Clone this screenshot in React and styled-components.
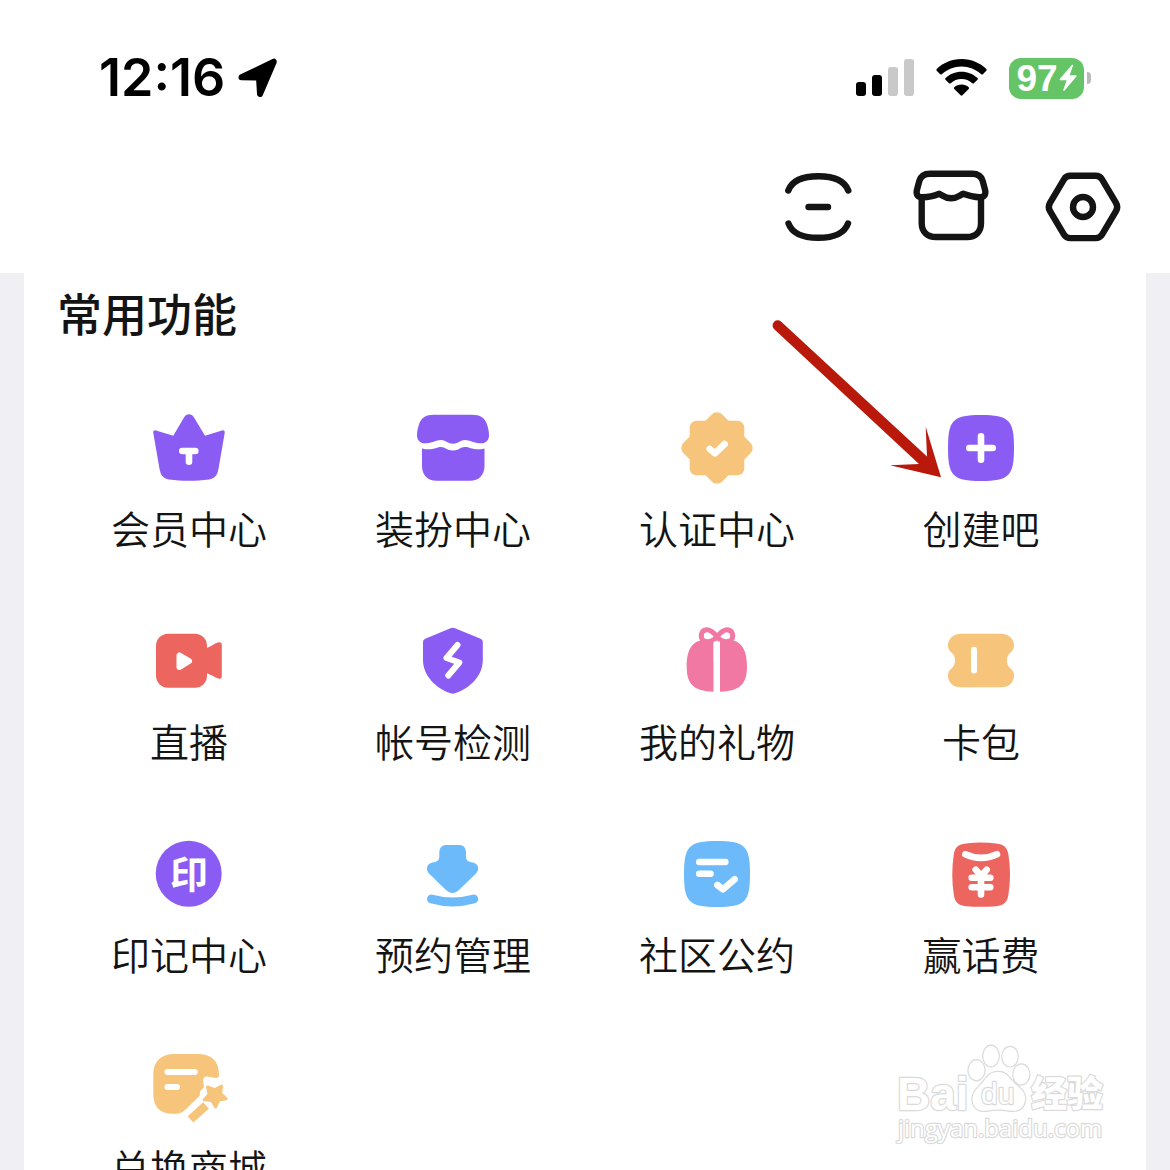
import React from 'react';
import styled, { createGlobalStyle } from 'styled-components';

const PURPLE = '#8b5cf3';
const RED = '#ed655f';
const ORANGE = '#f6c47b';
const PINK = '#f078a2';
const BLUE = '#6cbafa';
const INK = '#141414';

const GlobalStyle = createGlobalStyle`
  * {
    box-sizing: border-box;
  }
  body {
    margin: 0;
    background: #f0f0f4;
    font-family: 'Noto Sans CJK SC', 'Noto Sans', sans-serif;
    color: ${INK};
  }
`;

const Page = styled.div`
  position: relative;
  display: flex;
  flex-direction: column;
  height: 100vh;
  overflow: hidden;
`;

const Header = styled.header`
  flex: none;
  background: #fff;
`;

const StatusBar = styled.div`
  display: flex;
  align-items: center;
  justify-content: space-between;
  height: 156px;
  padding: 0 79px 0 99px;
`;

const StatusGroup = styled.div`
  display: flex;
  align-items: center;
  gap: ${(props) => props.$gap}px;
`;

const Time = styled.span`
  font-family: Inter, sans-serif;
  font-size: 52px;
  font-weight: 600;
  line-height: 60px;
  color: #000;
`;

const Battery = styled.div`
  display: flex;
  align-items: center;
  gap: 3px;

  &::after {
    content: '';
    width: 4px;
    height: 12px;
    border-radius: 0 6px 6px 0;
    background: #b9b9b9;
  }
`;

const BatteryLevel = styled.div`
  display: flex;
  align-items: center;
  justify-content: center;
  gap: 1px;
  width: 75px;
  height: 41px;
  border-radius: 12px;
  background: #65c466;
  color: #fff;
  font-family: 'Liberation Sans', sans-serif;
  font-size: 37px;
  font-weight: 700;
  line-height: 41px;
`;

const Toolbar = styled.nav`
  display: flex;
  justify-content: flex-end;
  gap: 52px;
  padding: 11px 47px 26px;
`;

const IconButton = styled.button`
  width: 80px;
  height: 80px;
  padding: 0;
  border: 0;
  background: none;
  cursor: pointer;
`;

const Card = styled.main`
  flex: none;
  margin: 0 24px;
  padding: 10px 33px 40px;
  background: #fff;
`;

const Title = styled.h1`
  margin: 0 0 65px;
  font-size: 45px;
  font-weight: 500;
  line-height: 60px;
`;

const Grid = styled.div`
  display: grid;
  grid-template-columns: repeat(4, 1fr);
  row-gap: 67px;
`;

const Item = styled.button`
  position: relative;
  display: flex;
  flex-direction: column;
  align-items: center;
  gap: 12px;
  padding: 0;
  border: 0;
  background: none;
  color: inherit;
  font-family: inherit;
  font-size: 39px;
  font-weight: 350;
  line-height: 54px;
  white-space: nowrap;
  cursor: pointer;
`;

const Glyph = styled.svg`
  display: block;
  flex: none;
  width: 80px;
  height: 80px;
  fill: ${(props) => props.$fill || 'none'};
  stroke-linecap: round;
  stroke-linejoin: round;
`;

/* strokes drawn on top of a filled icon */
const Lines = styled.g`
  fill: none;
  stroke: ${(props) => props.$color || '#fff'};
  stroke-width: ${(props) => props.$width || 6.6};
`;

const Pointer = styled.svg`
  position: absolute;
  top: -93px;
  left: -81px;
  width: 180px;
  height: 170px;
  pointer-events: none;
`;

const Watermark = styled.svg`
  position: absolute;
  right: 60px;
  bottom: 20px;
  width: 220px;
  height: 110px;
  fill: #fff;
  stroke: #dadada;
  stroke-width: 2.4;
  stroke-linejoin: round;
  paint-order: stroke;
  pointer-events: none;
`;

const SQUIRCLE = 'M40 7C68 7 73 12 73 40S68 73 40 73 7 68 7 40 12 7 40 7Z';

const LocationIcon = () => (
  <svg width="42" height="42" viewBox="0 0 42 42" fill="#000" stroke="#000" strokeWidth="6" strokeLinejoin="round">
    <path d="M4.500 20.300 36.800 4.700 23 37 22 20.500Z" />
  </svg>
);

const SignalIcon = () => (
  <svg width="58" height="38" viewBox="0 0 58 38">
    <rect x="0" y="23" width="10" height="14" rx="3" />
    <rect x="16" y="16" width="10" height="21" rx="3" />
    <rect x="32" y="8" width="10" height="29" rx="3" fill="#c9c9c9" />
    <rect x="48" y="0" width="10" height="37" rx="3" fill="#c9c9c9" />
  </svg>
);

const WifiIcon = () => (
  <svg width="51" height="38" viewBox="0 0 51 38">
    <path d="M25.500 0C35.500 0 44 3.800 50.300 10.100C50.800 10.600 50.800 11.300 50.300 11.800L46.800 15.200C46.300 15.700 45.700 15.700 45.200 15.200C39.800 10.200 33 7.400 25.500 7.400S11.200 10.200 5.800 15.200C5.300 15.700 4.700 15.700 4.200 15.200L.7 11.800C.2 11.300 .2 10.600 .7 10.100C7 3.800 15.500 0 25.500 0Z" />
    <path d="M25.500 12.700C31.800 12.700 37.300 15 41.500 19C42 19.500 42 20.200 41.500 20.700L37.900 24.200C37.400 24.700 36.800 24.700 36.300 24.200C33.400 21.600 29.700 20 25.500 20S17.600 21.600 14.700 24.200C14.200 24.700 13.600 24.700 13.100 24.200L9.500 20.700C9 20.200 9 19.500 9.500 19C13.700 15 19.200 12.700 25.500 12.700Z" />
    <path d="M25.500 25.500C28.300 25.500 30.800 26.500 32.700 28.200C33.200 28.700 33.200 29.400 32.700 29.900L26.400 36.200C25.800 36.800 25.200 36.800 24.600 36.200L18.300 29.900C17.800 29.400 17.800 28.700 18.300 28.200C20.200 26.500 22.700 25.500 25.500 25.500Z" />
  </svg>
);

const BoltIcon = () => (
  <svg width="18" height="28" viewBox="0 0 19 29" fill="#fff">
    <path d="M13.500 .8 1 15.200C.3 16 .7 16.800 1.700 16.800H8L4.600 27C4.200 28.300 5 28.600 5.900 27.700L18.200 13.100C18.900 12.300 18.500 11.600 17.500 11.600H11.300L14.700 1.700C15.100 .4 14.300 0 13.500 .8Z" />
  </svg>
);

const toolbar = [
  {
    label: '扫一扫',
    icon: (
      <>
        <path d="M9.300 23.500C13.500 12.500 25 9.300 39.300 9.300S65 12.500 69.300 23.500" />
        <path d="M9.500 56.500C13.500 67.500 25 70.800 39.300 70.800S65 67.500 69 56.500" />
        <path d="M29.500 40H49" />
      </>
    ),
  },
  {
    label: '装扮商店',
    icon: (
      <>
        <path d="M19 6.700H61C67 6.700 70.300 9 71.700 14L74.200 23.500C75 28 73 30.500 68 30.300C61 30.300 57 28.500 52.300 26.800C48 28.500 46 31.300 40 31.300S32 28.500 28.300 26.800C24 28.500 19 30.300 12 30.300C7 30.500 5 28 5.800 23.500L8.300 14C9.700 9 13 6.700 19 6.700Z" />
        <path d="M10.700 30.500V56C10.700 65 16.500 70 25 70H56C64.500 70 70 65 70 56V30.500" />
      </>
    ),
  },
  {
    label: '设置',
    icon: (
      <>
        <path d="M27.500 8.800H52.500C55.500 8.800 57.500 9.800 59 12.300L73 35.800C74.700 38.700 74.700 41.300 73 44.200L59 67.600C57.500 70.100 55.500 71.100 52.500 71.100H27.500C24.500 71.100 22.500 70.100 21 67.600L7 44.200C5.300 41.300 5.300 38.700 7 35.800L21 12.300C22.500 9.800 24.500 8.800 27.500 8.800Z" />
        <circle cx="40" cy="40" r="10" />
      </>
    ),
  },
];

const features = [
  {
    label: '会员中心',
    color: PURPLE,
    icon: (
      <>
        <path d="M7 22.500 24.300 27.800 35 9.500C37.500 5.300 42.500 5.300 45 9.500L56 27.800 73 22.500C75 22 76 23 75.700 25L69.800 59C68.500 67.500 66 70.500 60 71.500C47 73.300 33 73.300 20 71.500C14 70.500 11.500 67.500 10.200 59L4.300 25C4 23 5 22 7 22.500Z" />
        <Lines>
          <path d="M33.300 43H46.300M40 43V53.700" />
        </Lines>
      </>
    ),
  },
  {
    label: '装扮中心',
    color: PURPLE,
    icon: (
      <>
        <path d="M21 6.700H59C67.500 6.700 71.500 9.500 73.700 15.500C75.300 20 76 23.500 76 27.500C76 32 73 35.300 68 35.300C61 35.300 57 32 52 32S46 35.700 40 35.700S33 32 28 32S19 35.300 12 35.300C7 35.300 4 32 4 27.500C4 23.500 4.700 20 6.300 15.500C8.500 9.500 12.500 6.700 21 6.700Z" />
        <path d="M9 40.500C19 43 24 39 28 39S34 42.500 40 42.500S47 39 52 39S61 43 71.500 40.500V58C71.500 67 66 72.700 57 72.700H23.500C14.500 72.700 9 67 9 58Z" />
      </>
    ),
  },
  {
    label: '认证中心',
    color: ORANGE,
    icon: (
      <>
        <rect x="12.700" y="12.700" width="54.600" height="54.600" rx="7" />
        <rect x="12.700" y="12.700" width="54.600" height="54.600" rx="7" transform="rotate(45 40 40)" />
        <Lines>
          <path d="M32.800 41 37.900 45.300 47.700 36" />
        </Lines>
      </>
    ),
  },
  {
    label: '创建吧',
    color: PURPLE,
    pointed: true,
    icon: (
      <>
        <path d={SQUIRCLE} />
        <Lines>
          <path d="M28.300 40H51.700M40 28.300V51.700" />
        </Lines>
      </>
    ),
  },
  {
    label: '直播',
    color: RED,
    icon: (
      <>
        <rect x="7" y="12.700" width="51" height="54" rx="12" />
        <path d="M56 27.500C61 26.500 65 22.500 69.500 21.300C71.500 20.800 72.800 21.800 72.800 23.800V55.200C72.800 57.200 71.500 58.200 69.500 57.600C65 56.300 61 53 56 51.800Z" />
        <path d="M30.500 34.500V46L40 40Z" fill="#fff" stroke="#fff" strokeWidth="6" />
      </>
    ),
  },
  {
    label: '帐号检测',
    color: PURPLE,
    icon: (
      <>
        <path d="M37.500 7.300C39 6.600 40.500 6.600 42 7.300L67 17.600C69 18.400 69.800 19.500 69.800 21.500V39C69.800 54 58 67 42 72.200C40.500 72.800 39 72.800 37.500 72.200C22 67 10 54 10 39V21.500C10 19.500 10.800 18.400 12.800 17.600Z" />
        <Lines $width={6}>
          <path d="M44.500 24 33.500 37 46.300 41.500 35.300 54.500" />
        </Lines>
      </>
    ),
  },
  {
    label: '我的礼物',
    color: PINK,
    icon: (
      <>
        <path d="M36.500 19V70.700C16 70 9.700 63 9.700 45C9.700 31 14 19 28 19ZM43 19V70.700C63.500 70 70 63 70 45C70 31 65.500 19 51.500 19Z" />
        <Lines $color={PINK} $width={5}>
          <path d="M40 15.500C35.500 10.500 31.500 8.300 28.500 9C24 10 23 16 26 19.500C32 22 37 20 40 15.500C44.500 10.500 48.500 8.300 51.500 9C56 10 57 16 54 19.500C48 22 43 20 40 15.500Z" fill="#fff" />
        </Lines>
        <path d="M36.700 20.500H43V40H36.700Z" fill="#fff" />
      </>
    ),
  },
  {
    label: '卡包',
    color: ORANGE,
    icon: (
      <>
        <path d="M20 12.700H60C68 12.700 73 18 73 24.500C73 29 70.500 30.500 68.500 32.500C65 36.500 65 42.500 68.500 46.500C70.500 48.500 73 50 73 54.500C73 61.500 68 66.300 60 66.300H20C12 66.300 7 61.500 7 54.500C7 50 9.500 48.500 11.500 46.500C15 42.500 15 36.500 11.500 32.500C9.500 30.500 7 29 7 24.500C7 18 12 12.700 20 12.700Z" />
        <Lines $width={6}>
          <path d="M33 28.800V49.500" />
        </Lines>
      </>
    ),
  },
  {
    label: '印记中心',
    color: PURPLE,
    icon: (
      <>
        <circle cx="39.700" cy="39.700" r="33" />
        <text x="40" y="54" fill="#fff" fontSize="38" fontWeight="700" textAnchor="middle">
          印
        </text>
      </>
    ),
  },
  {
    label: '预约管理',
    color: BLUE,
    icon: (
      <>
        <path d="M34 11H45.500C50.500 11 53 13.500 53 18.500V22C53 26 54.500 27.800 58.500 28.200C65.500 28.800 67.300 35.500 62.500 40C57 45 51.500 51 46 56C41.500 60 37.500 60 33 56C28 51.500 22 45 16.500 40C12 35.500 13.700 28.800 20.800 28.200C24.800 27.800 26.300 26 26.300 22V18.500C26.300 13.500 29 11 34 11Z" />
        <Lines $color={BLUE} $width={9}>
          <path d="M18.500 65C32 68.800 47 68.800 60.700 65" />
        </Lines>
      </>
    ),
  },
  {
    label: '社区公约',
    color: BLUE,
    icon: (
      <>
        <path d={SQUIRCLE} />
        <Lines>
          <path d="M22.300 28H48.300M22.300 39.700H33.500M40.300 51 46 55.300 57.700 45.300" />
        </Lines>
      </>
    ),
  },
  {
    label: '赢话费',
    color: RED,
    icon: (
      <>
        <path d="M25 9.500C35 8.300 45 8.300 55 9.500C63 10.300 66.500 13.500 67.500 21C69.500 34 69.500 47 67.500 60C66.500 68 63 71.500 55 72.200C45 73 35 73 25 72.200C17 71.500 13.700 68 12.700 60C10.800 47 10.800 34 12.700 21C13.700 13.500 17 10.300 25 9.500Z" />
        <Lines>
          <path d="M24.300 20.300Q40 27.500 56 20.300M34.700 35.700 40 42 45.700 35.700M30.700 43.700H49.300M30.700 53.300H49.300M40 42V60.500" />
        </Lines>
      </>
    ),
  },
  {
    label: '兑换商城',
    color: ORANGE,
    icon: (
      <>
        <path d="M26 7H48C63 7 70 14 70 28C70 30 69 31 67 31L58 29.500C55.500 29.200 54 31 54.200 33.500L55 40 51.500 44C50 45.500 51.500 47.500 50.500 49L37 62C34 65 31.500 66.700 27 66.700H24C11 66.700 4.300 60 4.300 47V28C4.300 14 12 7 26 7Z" />
        <Lines $width={6}>
          <path d="M18.500 25H45.700M18.500 40H28" />
        </Lines>
        <Lines $color={ORANGE} $width={3}>
          <path
            d="M66 60 62.500 53.300 55 52.300 60.200 46.800 59 39.500 66 42.700 73 39.500 71.800 46.800 77 52.300 69.500 53.300Z"
            fill={ORANGE}
            transform="rotate(-3 66 48.700)"
          />
        </Lines>
        <path d="M41.500 72.300 57 58.500" stroke={ORANGE} strokeWidth="8.500" strokeLinecap="butt" />
      </>
    ),
  },
];

const PawWatermark = () => (
  <Watermark viewBox="0 0 220 110" aria-hidden="true">
    <text x="7" y="70" fontFamily="Liberation Sans" fontSize="46" fontWeight="700">
      Bai
    </text>
    <ellipse cx="86.500" cy="30.300" rx="8" ry="10" />
    <ellipse cx="101" cy="16" rx="7.700" ry="10.300" />
    <ellipse cx="120" cy="16.700" rx="7.700" ry="9.700" />
    <ellipse cx="131.300" cy="34.500" rx="8" ry="10" />
    <path d="M108 32C117 32 119 38 124 43C130 48 136 52 135 60C134 69 127 72 119 70.500C111 69 105 69 98 70.500C90 72 83 69 82.500 60C82 52 88 48 93 42C97 37 100 32 108 32Z" />
    <text x="91" y="64" fontFamily="Liberation Sans" fontSize="30">
      du
    </text>
    <text x="141" y="67" fontFamily="Noto Sans CJK SC" fontSize="36" fontWeight="900">
      经验
    </text>
    <text x="8" y="97" fontFamily="Open Sans" fontSize="24" fontWeight="500">
      jingyan.baidu.com
    </text>
  </Watermark>
);

const App = () => {
  return (
    <Page>
      <GlobalStyle />
      <Header>
        <StatusBar>
          <StatusGroup $gap={12}>
            <Time>12:16</Time>
            <LocationIcon />
          </StatusGroup>
          <StatusGroup $gap={22}>
            <SignalIcon />
            <WifiIcon />
            <Battery>
              <BatteryLevel>
                97
                <BoltIcon />
              </BatteryLevel>
            </Battery>
          </StatusGroup>
        </StatusBar>
        <Toolbar>
          {toolbar.map(({ label, icon }) => (
            <IconButton key={label} type="button" aria-label={label}>
              <Glyph viewBox="0 0 80 80" stroke={INK} strokeWidth="6.400">
                {icon}
              </Glyph>
            </IconButton>
          ))}
        </Toolbar>
      </Header>
      <Card>
        <Title>常用功能</Title>
        <Grid>
          {features.map(({ label, color, icon, pointed }) => (
            <Item key={label} type="button">
              <Glyph viewBox="0 0 80 80" $fill={color} aria-hidden="true">
                {icon}
              </Glyph>
              {label}
              {pointed && (
                <Pointer viewBox="0 0 180 170" fill="#b8190b" aria-hidden="true">
                  <path d="M13 6.500 159 141.500 157.700 111.700 173 162.300 122 150.300 151 149 6.500 14.500A5 5 0 0 1 13 6.500Z" />
                </Pointer>
              )}
            </Item>
          ))}
        </Grid>
      </Card>
      <PawWatermark />
    </Page>
  );
};

export default App;
